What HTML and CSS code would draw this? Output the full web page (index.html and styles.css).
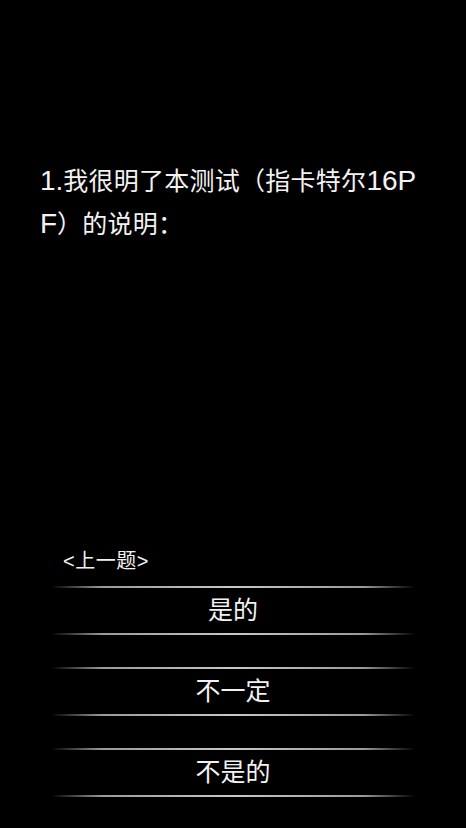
FILE: index.html
```html
<!DOCTYPE html>
<html lang="zh-CN">
<head>
    <meta charset="UTF-8">
    <meta name="viewport" content="width=device-width, initial-scale=1.0">
    <title>卡特尔16PF测试</title>
    <link rel="stylesheet" href="styles.css">
</head>
<body>
    <div class="page">
        <p class="question"><span class="latin">1.</span>我很明了本测试（指卡特尔<span class="latin">16PF</span>）的说明：</p>

        <div class="answers">
            <a class="prev" href="#">&lt;上一题&gt;</a>
            <div class="option">是的</div>
            <div class="option">不一定</div>
            <div class="option">不是的</div>
        </div>
    </div>
</body>
</html>
```

FILE: styles.css
```css
html, body {
    margin: 0;
    background: #000;
}
body {
    font-family: "Liberation Sans", "Noto Sans CJK SC", sans-serif;
    color: #f2f2f2;
}
.page {
    width: 466px;
    height: 828px;
    overflow: hidden;
}
.question {
    margin: 0;
    padding: 160px 40px 0 40px;
    height: 86px;
    font-size: 25px;
    letter-spacing: 0.25px;
    line-height: 43px;
    word-break: break-all;
}
.question .latin {
    font-size: 28px;
    line-height: 1;
    letter-spacing: 0;
}
.answers {
    margin-top: 301px;
    padding: 0 51px;
}
.prev {
    display: block;
    margin-left: 12px;
    margin-bottom: 11px;
    font-size: 20px;
    letter-spacing: 0.5px;
    line-height: 28px;
    color: #f2f2f2;
    text-decoration: none;
}
.option {
    text-align: center;
    font-size: 25px;
    line-height: 45px;
    margin-bottom: 32px;
}
.option::before,
.option::after {
    content: "";
    display: block;
    height: 2px;
    background: linear-gradient(to right, rgba(200, 200, 200, 0), #9a9a9a 14%, #c8c8c8 50%, #9a9a9a 86%, rgba(200, 200, 200, 0));
}
```
